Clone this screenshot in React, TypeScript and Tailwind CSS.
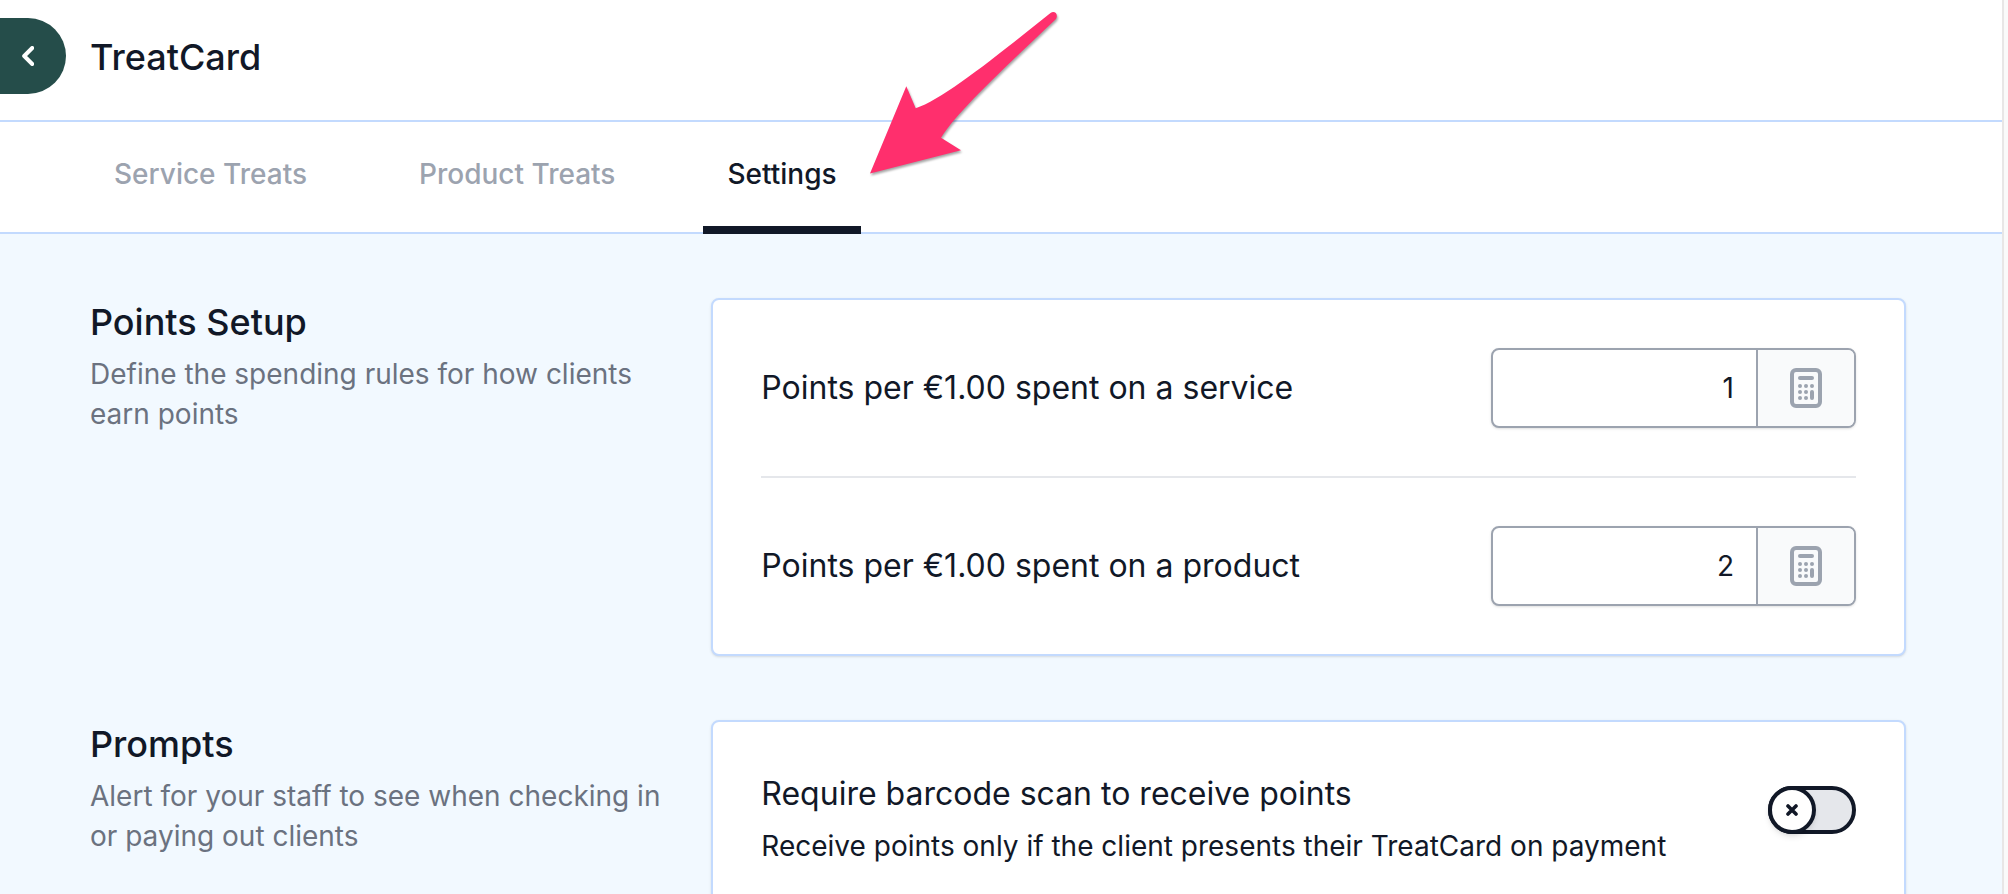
import React, { useState } from 'react';

const TABS = [
  { id: 'service', label: 'Service Treats' },
  { id: 'product', label: 'Product Treats' },
  { id: 'settings', label: 'Settings' },
];

const App: React.FC = () => {
  const [activeTab, setActiveTab] = useState('settings');

  return (
    <div className="flex h-screen overflow-hidden bg-[#fafafa] font-[Inter,sans-serif] text-[#111827]">
      <div className="flex-1 min-w-0 mr-1 border-r-2 border-[#e8e6e6] bg-[#f2f9ff]">
        <header className="relative flex items-start bg-white border-b-2 border-[#c3dafe] pt-[18px] pb-[26px]">
          <button
            type="button"
            aria-label="Back"
            className="w-[66px] h-[76px] rounded-r-full bg-[#254d4a] text-white flex items-center pl-[22px]"
          >
            <svg width="12" height="20" viewBox="0 0 12 20" fill="none" aria-hidden="true">
              <path d="M10.2 2 2.2 10l8 8" stroke="currentColor" strokeWidth="4" strokeLinecap="round" strokeLinejoin="round" />
            </svg>
          </button>
          <h1 className="ml-6 text-4xl leading-[78px] -mb-0.5 font-medium">TreatCard</h1>
          <PointerArrow />
        </header>

        <nav className="flex gap-16 bg-white border-b-2 border-[#c3dafe] pl-[90px]" role="tablist">
          {TABS.map((tab) => (
            <TabButton
              key={tab.id}
              label={tab.label}
              active={tab.id === activeTab}
              onClick={() => setActiveTab(tab.id)}
            />
          ))}
        </nav>

        <main className="flex flex-col gap-16 pl-[90px] pr-24 py-16">
          <Section title="Points Setup" description="Define the spending rules for how clients earn points">
            <PointsField id="service-points" label="Points per €1.00 spent on a service" initial="1" />
            <hr className="my-12 border-0 h-0.5 bg-[#e5e7eb]" />
            <PointsField id="product-points" label="Points per €1.00 spent on a product" initial="2" />
          </Section>

          <Section
            title="Prompts"
            description="Alert for your staff to see when checking in or paying out clients"
          >
            <div className="flex items-start justify-between gap-8">
              <div>
                <label htmlFor="require-scan" className="block text-[32px] leading-[48px]">
                  Require barcode scan to receive points
                </label>
                <p id="require-scan-hint" className="mt-2 text-[28px] leading-10">
                  Receive points only if the client presents their TreatCard on payment
                </p>
              </div>
              <Toggle id="require-scan" describedBy="require-scan-hint" />
            </div>
          </Section>
        </main>
      </div>
    </div>
  );
};

const TabButton: React.FC<{ label: string; active: boolean; onClick: () => void }> = ({
  label,
  active,
  onClick,
}) => (
  <button
    type="button"
    role="tab"
    aria-selected={active}
    onClick={onClick}
    className={`h-28 -mb-0.5 px-6 border-b-8 text-[28px] leading-10 font-medium ${
      active ? 'border-[#111827] text-[#111827]' : 'border-transparent text-[#9ca3af]'
    }`}
  >
    {label}
  </button>
);

const Section: React.FC<{ title: string; description: string; children: React.ReactNode }> = ({
  title,
  description,
  children,
}) => (
  <section className="grid grid-cols-3 gap-12">
    <div>
      <h2 className="text-4xl leading-[48px] font-medium">{title}</h2>
      <p className="mt-2 text-[28px] leading-10 text-[#6b7280]">{description}</p>
    </div>
    <div className="col-span-2 rounded-lg border-2 border-[#c3dafe] bg-white p-12 shadow-sm">
      {children}
    </div>
  </section>
);

const PointsField: React.FC<{ id: string; label: string; initial: string }> = ({ id, label, initial }) => {
  const [value, setValue] = useState(initial);

  return (
    <div className="flex items-center justify-between gap-8">
      <label htmlFor={id} className="text-[32px] leading-[48px]">
        {label}
      </label>
      <div className="flex w-[365px] h-20 rounded-lg border-2 border-[#9ca3af] bg-white overflow-hidden shadow-sm">
        <input
          id={id}
          type="text"
          inputMode="numeric"
          value={value}
          onChange={(e) => setValue(e.target.value)}
          className="flex-1 min-w-0 px-[22px] text-right text-[28px] leading-10 outline-none"
        />
        <button
          type="button"
          aria-label="Open calculator"
          className="w-[98px] border-l-2 border-[#9ca3af] bg-[#f9fafb] text-[#9ca3af] flex items-center justify-center"
        >
          <CalculatorIcon />
        </button>
      </div>
    </div>
  );
};

const Toggle: React.FC<{ id: string; describedBy: string }> = ({ id, describedBy }) => (
  <span className="relative mt-4 shrink-0 w-[88px] h-12">
    <input
      id={id}
      type="checkbox"
      role="switch"
      aria-describedby={describedBy}
      className="peer block appearance-none w-full h-full rounded-full border-4 border-[#111827] bg-[#e5e7eb] cursor-pointer"
    />
    <span className="pointer-events-none absolute left-0 top-0 w-12 h-12 rounded-full border-4 border-[#111827] bg-white flex items-center justify-center shadow-md transition-transform peer-checked:translate-x-10">
      <svg width="12" height="12" viewBox="0 0 12 12" fill="none" aria-hidden="true">
        <path d="m2 2 8 8M10 2l-8 8" stroke="#111827" strokeWidth="3.6" strokeLinecap="round" />
      </svg>
    </span>
  </span>
);

const CalculatorIcon: React.FC = () => (
  <svg width="32" height="40" viewBox="0 0 32 40" fill="none" aria-hidden="true">
    <rect x="2" y="2" width="28" height="36" rx="4" stroke="currentColor" strokeWidth="4" />
    <g fill="currentColor">
      <rect x="8" y="8" width="16" height="4" rx="2" />
      <circle cx="10" cy="18" r="2" />
      <circle cx="16" cy="18" r="2" />
      <circle cx="22" cy="18" r="2" />
      <circle cx="10" cy="24" r="2" />
      <circle cx="16" cy="24" r="2" />
      <circle cx="10" cy="30" r="2" />
      <circle cx="16" cy="30" r="2" />
      <rect x="20" y="22" width="4" height="10" rx="2" />
    </g>
  </svg>
);

// Callout that points at the Settings tab
const PointerArrow: React.FC = () => (
  <svg
    className="pointer-events-none absolute left-[860px] top-0 z-10 drop-shadow-[1px_2px_1px_rgba(0,0,0,0.35)]"
    width="210"
    height="184"
    viewBox="0 0 210 184"
    aria-hidden="true"
  >
    <path
      d="M10 173.5 46.3 86.3 55.7 108.3C84 99 139 54 190.5 13C195 10 199 15 195.5 19.5C150 63 100 108 81 137.7L101 150.3Z"
      fill="#ff2f6d"
    />
  </svg>
);

export default App;
